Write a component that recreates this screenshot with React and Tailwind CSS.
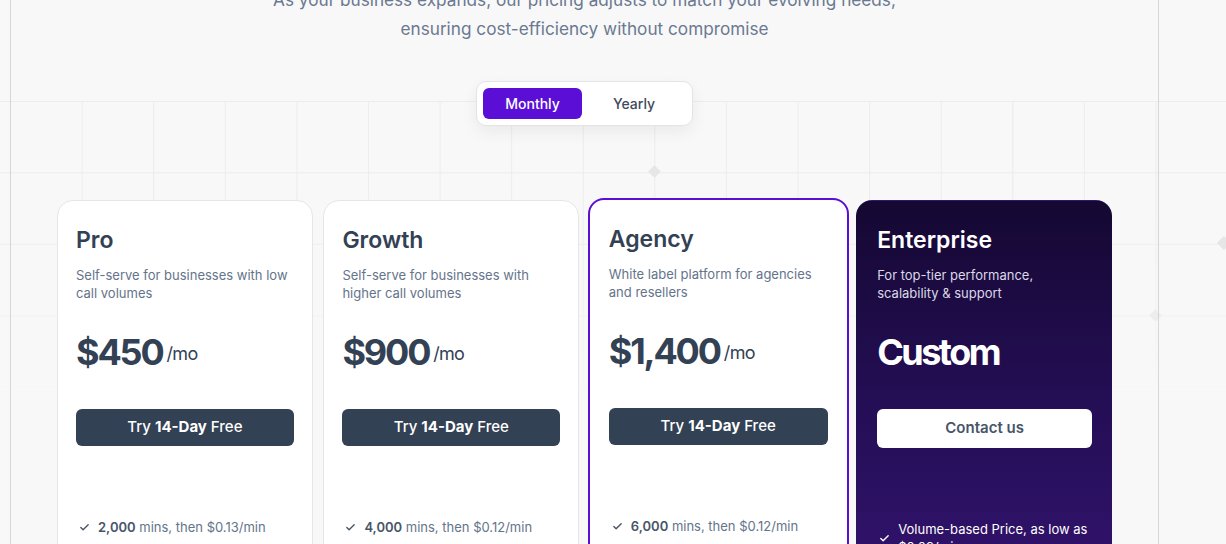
import { Check } from 'lucide-react';

const plans = [
  {
    name: 'Pro',
    desc: 'Self-serve for businesses with low call volumes',
    price: '$450',
    mins: '2,000',
    rate: '$0.13/min',
  },
  {
    name: 'Growth',
    desc: 'Self-serve for businesses with higher call volumes',
    price: '$900',
    mins: '4,000',
    rate: '$0.12/min',
  },
  {
    name: 'Agency',
    desc: 'White label platform for agencies and resellers',
    price: '$1,400',
    mins: '6,000',
    rate: '$0.12/min',
    featured: true,
  },
];

function PlanCard({ plan }) {
  return (
    <div
      className={`flex flex-col rounded-2xl bg-white pt-6 pb-10 ${
        plan.featured
          ? 'border-2 border-[#5b0fd6] -ml-[2px] -mr-[3px] -mt-[2px] px-[19px]'
          : 'border border-[#e6e6e6] px-[18px]'
      }`}
    >
      <h3 className="text-[23px] leading-[30px] font-semibold text-[#334155]">{plan.name}</h3>
      <p className="mt-[11px] text-[13px] leading-[18px] text-[#64748b]">{plan.desc}</p>
      <div className="mt-[31px] flex items-center gap-[4px] h-[38px]">
        <span className="text-[36px] leading-[38px] font-bold tracking-[-0.06em] text-[#334155]">
          {plan.price}
        </span>
        <span className="mt-[3px] text-[18px] text-[#334155] tracking-[-0.04em]">/mo</span>
      </div>
      <button className="mt-[38px] h-[37px] w-full rounded-md bg-[#334155] text-[15px] font-medium text-white">
        Try <span className="font-bold">14-Day</span> Free
      </button>
      <ul className="mt-[72px] flex flex-col gap-3">
        <li className="flex items-center gap-[8px] pl-[3px] text-[13px] leading-[18px] text-[#64748b]">
          <Check className="h-[11px] w-[11px] text-[#475569]" strokeWidth={3} />
          <span>
            <span className="font-semibold text-[#475569]">{plan.mins}</span> mins, then {plan.rate}
          </span>
        </li>
        <li className="flex items-center gap-[8px] pl-[3px] text-[13px] leading-[18px] text-[#64748b]">
          <Check className="h-[11px] w-[11px] text-[#475569]" strokeWidth={3} />
          <span>Unlimited concurrent calls</span>
        </li>
      </ul>
    </div>
  );
}

function EnterpriseCard() {
  return (
    <div className="flex flex-col rounded-2xl border border-transparent bg-[linear-gradient(180deg,#150832_0px,#240e55_200px,#2f1268_343px,#3a1880_500px)] pl-[20px] pr-[19px] pt-6 pb-10">
      <h3 className="text-[23px] leading-[30px] font-semibold text-white">Enterprise</h3>
      <p className="mt-[11px] text-[13px] leading-[18px] text-[#dcd8e8] pr-6">
        For top-tier performance, scalability &amp; support
      </p>
      <div className="mt-[31px] h-[38px] flex items-center">
        <span className="text-[36px] leading-[38px] font-bold tracking-[-0.07em] text-white">Custom</span>
      </div>
      <button className="mt-[38px] h-[39px] w-full rounded-md bg-white text-[15px] font-semibold text-[#475569]">
        Contact us
      </button>
      <ul className="mt-[72px] flex flex-col gap-3">
        <li className="flex items-center gap-[8px] pl-[2px] text-[13px] leading-[18px] text-white">
          <Check className="h-[11px] w-[11px] shrink-0 text-white" strokeWidth={3} />
          <span>Volume-based Price, as low as $0.09/min</span>
        </li>
      </ul>
    </div>
  );
}

export default function App() {
  return (
    <div className="relative h-[544px] w-full overflow-hidden bg-[#f8f8f8] font-['Inter',sans-serif]">
      {/* background grid */}
      <div className="absolute left-[10px] right-0 top-[101px] bottom-0 bg-[linear-gradient(to_right,#ececec_1px,transparent_1px),linear-gradient(to_bottom,#ececec_1px,transparent_1px)] bg-[size:71.6px_71.4px] [mask-image:linear-gradient(to_bottom,black_90px,transparent_300px)]" />
      <div className="absolute left-0 w-[10px] top-[101px] bottom-0 bg-[linear-gradient(to_bottom,#ececec_1px,transparent_1px)] bg-[size:71.6px_71.4px] [mask-image:linear-gradient(to_bottom,black_90px,transparent_300px)]" />
      <div className="absolute left-[650px] top-[167px] h-[9px] w-[9px] rotate-45 bg-[#e6e6e6]" />
      <div className="absolute left-[1151px] top-[311px] h-[9px] w-[9px] rotate-45 bg-[#ededed]" />
      <div className="absolute left-[1219px] top-[238px] h-[10px] w-[10px] rotate-45 bg-[#e6e6e6]" />

      <div className="relative ml-[10px] flex h-full w-[1149px] flex-col border-x border-[#d6d6d6]">
        <div className="-mt-[15px] flex flex-col items-center">
          <p className="text-center text-[17.2px] leading-[29px] text-[#6b7891]">
            As your business expands, our pricing adjusts to match your evolving needs,
            <br />
            ensuring cost-efficiency without compromise
          </p>

          <div className="mt-[38px] flex items-center rounded-[10px] border border-[#e4e4e4] bg-white p-[6px] shadow-[0_6px_16px_rgba(0,0,0,0.06)]">
            <button className="h-[31px] w-[99px] rounded-md bg-[#5b0fd6] text-[14px] font-medium text-white">
              Monthly
            </button>
            <button className="h-[31px] w-[104px] text-[14px] font-medium text-[#3f4a5c]">Yearly</button>
          </div>
        </div>

        <div className="mt-[74px] ml-[46px] grid w-[1055px] grid-cols-4 items-start gap-[10.6px]">
          {plans.map((p) => (
            <PlanCard key={p.name} plan={p} />
          ))}
          <EnterpriseCard />
        </div>
      </div>
    </div>
  );
}
